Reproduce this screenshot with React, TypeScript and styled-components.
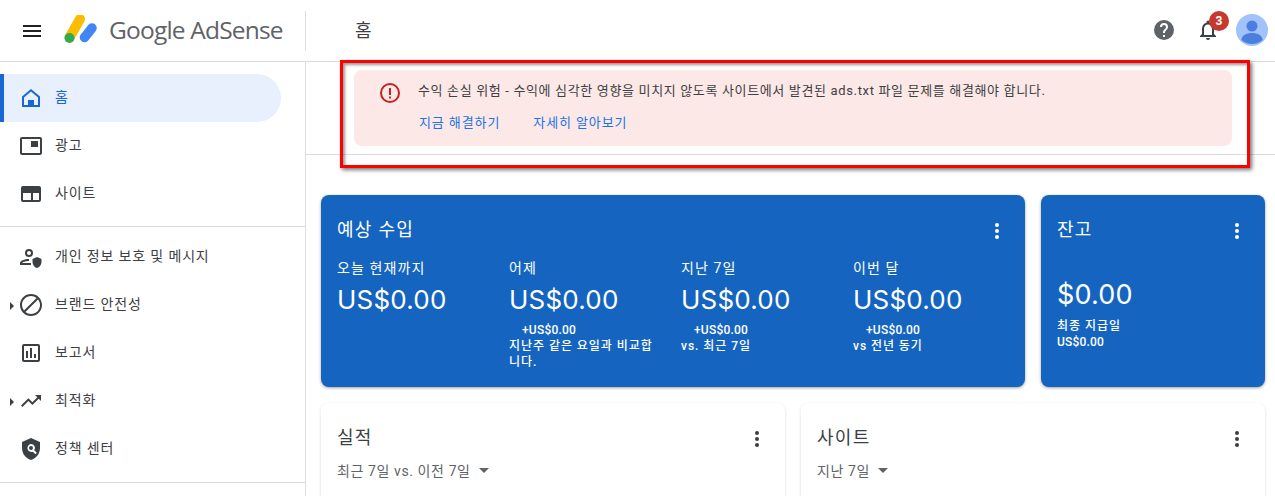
import styled, { createGlobalStyle } from "styled-components";
import type { ReactNode } from "react";

const Global = createGlobalStyle`
  html, body { margin: 0; padding: 0; background: #fff; }
  body { font-family: Roboto, "Noto Sans CJK KR", sans-serif; color: #3c4043; }
  * { box-sizing: border-box; }
`;

const Page = styled.div`
  position: relative;
  width: 1275px;
  height: 496px;
  overflow: hidden;
`;

const Header = styled.header`
  display: flex;
  align-items: center;
  height: 62px;
  border-bottom: 1px solid #dadce0;
`;

const MenuButton = styled.div`
  width: 64px;
  display: flex;
  justify-content: center;
`;

const Logo = styled.div`
  display: flex;
  align-items: center;
  width: 242px;
  gap: 11px;
  height: 40px;
  border-right: 1px solid #dadce0;
`;

const LogoText = styled.span`
  font: 400 24.5px "Open Sans", sans-serif;
  letter-spacing: -0.8px;
  color: #5f6368;
  margin-bottom: 2px;
`;

const PageTitle = styled.div`
  margin: 0 0 4px 49px;
  font-size: 18px;
  color: #3c4043;
`;

const HeaderTools = styled.div`
  margin: 0 7px 1px auto;
  display: flex;
  align-items: center;
  gap: 20px;
`;

const Bell = styled.div`
  position: relative;
  width: 24px;
  height: 24px;
  margin-right: -4px;
`;

const BellBadge = styled.span`
  position: absolute;
  top: -7px;
  left: 13px;
  width: 20px;
  height: 20px;
  border-radius: 50%;
  background: #c5392f;
  color: #fff;
  font-size: 12px;
  font-weight: 700;
  line-height: 20px;
  text-align: center;
`;

const Body = styled.div`
  display: flex;
  height: 434px;
`;

const Sidebar = styled.nav`
  width: 306px;
  flex: none;
  border-right: 1px solid #dadce0;
  padding-top: 12px;
`;

const NavItem = styled.div<{ $active?: boolean }>`
  position: relative;
  display: flex;
  align-items: center;
  height: 48px;
  width: 281px;
  gap: 12px;
  font-size: 14px;
  letter-spacing: 0.85px;
  color: ${(p) => (p.$active ? "#1967d2" : "#3c4043")};
  background: ${(p) => (p.$active ? "#e8f0fe" : "transparent")};
  border-radius: ${(p) => (p.$active ? "0 24px 24px 0" : "0")};
  border-left: ${(p) => (p.$active ? "4px solid #1967d2" : "none")};
  padding-left: ${(p) => (p.$active ? "15px" : "19px")};
`;

const NavLabel = styled.span`
  margin-bottom: 5px;
`;

const Caret = styled.span`
  position: absolute;
  left: 10px;
  top: 21px;
  border-left: 4px solid #3c4043;
  border-top: 4px solid transparent;
  border-bottom: 4px solid transparent;
`;

const NavDivider = styled.hr<{ $last?: boolean }>`
  margin: ${(p) => (p.$last ? "9px 0" : "8px 0 6px")};
  border: 0;
  border-top: 1px solid #dadce0;
`;

const Main = styled.main`
  flex: 1;
  min-width: 0;
`;

const BannerArea = styled.div`
  height: 93px;
  padding: 8px 43px 0 48px;
  border-bottom: 1px solid #dadce0;
`;

const Banner = styled.div`
  height: 76px;
  border-radius: 8px;
  background: #fce8e6;
  padding: 11px 0 0 24px;
  display: flex;
  gap: 16px;
`;

const BannerText = styled.div`
  font-size: 13px;
  letter-spacing: 0.65px;
  padding-top: 0;
  line-height: 19px;
  color: #3c4043;
`;

const BannerLinks = styled.div`
  display: flex;
  gap: 33px;
  margin: 13px 0 0 1px;
  letter-spacing: 0.9px;
  color: #1a73e8;
`;

const Annotation = styled.div`
  position: absolute;
  left: 340px;
  top: 60px;
  width: 910px;
  height: 108px;
  border: 3px solid #ff0000;
  box-shadow: 2px 2px 4px rgba(0, 0, 0, 0.55), inset 2px 2px 3px rgba(0, 0, 0, 0.4);
`;

const Cards = styled.div`
  display: grid;
  grid-template-columns: 704px 224px;
  gap: 16px;
  padding: 40px 0 0 15px;
`;

const Card = styled.section<{ $blue?: boolean }>`
  position: relative;
  border-radius: 8px;
  background: ${(p) => (p.$blue ? "#1565c0" : "#fff")};
  color: ${(p) => (p.$blue ? "#fff" : "#3c4043")};
  padding: 21px 16px;
  box-shadow: 0 1px 2px rgba(60, 64, 67, 0.3), 0 1px 3px 1px rgba(60, 64, 67, 0.15);
`;

const BlueCard = styled(Card)`
  height: 192px;
`;

const BottomCards = styled.div`
  display: grid;
  grid-template-columns: 464px 464px;
  gap: 16px;
  padding: 16px 0 0 15px;
`;

const WhiteCard = styled(Card)`
  height: 120px;
  box-shadow: 0 1px 3px rgba(60, 64, 67, 0.2);
`;

const CardTitle = styled.h2`
  margin: 0;
  font-size: 18px;
  font-weight: 400;
  letter-spacing: 1.3px;
  line-height: 27px;
`;

const More = styled.span`
  position: absolute;
  right: 16px;
  top: 24px;
  display: flex;
`;

const Metrics = styled.div`
  display: grid;
  grid-template-columns: repeat(4, 172px);
  margin-top: 15px;
`;

const MetricLabel = styled.div`
  font-size: 14px;
  letter-spacing: 1.1px;
  line-height: 20px;
`;

const MetricValue = styled.div`
  font: 400 26px Inter, sans-serif;
  letter-spacing: 0.2px;
  line-height: 38px;
  margin-top: 3px;
`;

const MetricDelta = styled.div`
  font-size: 12px;
  font-weight: 500;
  letter-spacing: 0.2px;
  line-height: 16px;
  margin-top: 3px;
  padding-left: 13px;
`;

const MetricNote = styled.div`
  font-size: 12px;
  font-weight: 500;
  letter-spacing: 0.95px;
  line-height: 16px;
  width: 150px;
`;

const BalanceValue = styled(MetricValue)`
  font-size: 27px;
  margin-top: 33px;
  margin-bottom: 4px;
`;

const BalanceAmount = styled(MetricDelta)`
  margin-top: 0;
  padding-left: 0;
`;

const Range = styled.div`
  display: flex;
  align-items: center;
  gap: 8px;
  margin-top: 9px;
  font-size: 14px;
  letter-spacing: 0.6px;
  color: #5f6368;
`;

const RangeCaret = styled.span`
  border-top: 5px solid #5f6368;
  border-left: 5px solid transparent;
  border-right: 5px solid transparent;
`;

const NavIcon = ({ children }: { children: ReactNode }) => (
  <svg width="24" height="24" viewBox="0 0 24 24" fill="#3c4043" style={{ flex: "none" }}>
    {children}
  </svg>
);

const Dots = ({ color }: { color: string }) => (
  <svg width="24" height="24" viewBox="0 0 24 24" fill={color}>
    <circle cx="12" cy="6" r="2" />
    <circle cx="12" cy="12" r="2" />
    <circle cx="12" cy="18" r="2" />
  </svg>
);

const nav = [
  { label: "광고", icon: <path d="M21 3H3a2 2 0 0 0-2 2v14c0 1.1.9 2 2 2h18a2 2 0 0 0 2-2V5a2 2 0 0 0-2-2zm0 16H3V5h18v14zM19 7h-7v6h7V7z" /> },
  { label: "사이트", icon: <path d="M20 4H4a2 2 0 0 0-2 2v12c0 1.1.9 2 2 2h16a2 2 0 0 0 2-2V6a2 2 0 0 0-2-2zM4 18v-7h8v7H4zm10 0v-7h6v7h-6z" /> },
];

const nav2 = [
  {
    label: "개인 정보 보호 및 메시지",
    icon: <path d="M10 12a4 4 0 1 0 0-8 4 4 0 0 0 0 8zm0-6a2 2 0 1 1 0 4 2 2 0 0 1 0-4zM3 18c.2-.7 3.3-2 7-2v-2c-4.700 0-9 1.800-9 4v2h11v-2H3zm15-6l-4.500 2v3c0 2.800 1.900 5.400 4.500 6 2.600-.6 4.500-3.200 4.500-6v-3L18 12z" />,
  },
  {
    label: "브랜드 안전성",
    caret: true,
    icon: <path d="M12 1C5.900 1 1 5.900 1 12s4.900 11 11 11 11-4.900 11-11S18.100 1 12 1zM3 12c0-5 4-9 9-9 2.100 0 4.100.7 5.600 2L5 17.600A8.900 8.900 0 0 1 3 12zm9 9c-2.100 0-4.100-.7-5.600-2L19 6.400c1.300 1.500 2 3.500 2 5.600 0 5-4 9-9 9z" />,
  },
  {
    label: "보고서",
    icon: <path d="M19 3H5a2 2 0 0 0-2 2v14c0 1.100.9 2 2 2h14a2 2 0 0 0 2-2V5a2 2 0 0 0-2-2zm0 16H5V5h14v14zM7 10h2v7H7v-7zm4-3h2v10h-2V7zm4 6h2v4h-2v-4z" />,
  },
  {
    label: "최적화",
    caret: true,
    icon: <path d="M16 6l2.300 2.300-4.900 4.900-4-4L2 16.600 3.400 18l6-6 4 4 6.300-6.300L22 12V6h-6z" />,
  },
  {
    label: "정책 센터",
    icon: <path fillRule="evenodd" d="M12 1L3 5v6c0 5.600 3.800 10.700 9 12 5.200-1.300 9-6.400 9-12V5l-9-4zm0 6a4 4 0 0 1 3.300 6.300l2.500 2.500-1.400 1.400-2.500-2.500A4 4 0 1 1 12 7zm0 2a2 2 0 1 0 0 4 2 2 0 0 0 0-4z" />,
  },
];

const metrics = [
  { label: "오늘 현재까지" },
  { label: "어제", note: "지난주 같은 요일과 비교합니다." },
  { label: "지난 7일", note: "vs. 최근 7일" },
  { label: "이번 달", note: "vs 전년 동기" },
];

export default function App() {
  return (
    <Page>
      <Global />
      <Header>
        <MenuButton>
          <svg width="24" height="24" viewBox="0 0 24 24" fill="#202124">
            <path d="M3 18h18v-2H3v2zm0-5h18v-2H3v2zm0-7v2h18V6H3z" />
          </svg>
        </MenuButton>
        <Logo>
          <svg width="34" height="32" viewBox="0 0 34 32">
            <path d="M16 4 L5.500 22.500" stroke="#fbbc04" strokeWidth="10" strokeLinecap="round" />
            <path d="M28 13 L20.500 22.500" stroke="#4285f4" strokeWidth="9.500" strokeLinecap="round" />
            <circle cx="5.500" cy="23" r="5" fill="#34a853" />
          </svg>
          <LogoText>Google AdSense</LogoText>
        </Logo>
        <PageTitle>홈</PageTitle>
        <HeaderTools>
          <svg width="24" height="24" viewBox="0 0 24 24" fill="#5f6368">
            <path d="M12 2a10 10 0 1 0 0 20 10 10 0 0 0 0-20zm1 17h-2v-2h2v2zm2.100-7.700-.9.900c-.7.700-1.200 1.300-1.200 2.800h-2v-.5c0-1.100.5-2.100 1.200-2.800l1.200-1.300c.4-.3.600-.8.600-1.400a2 2 0 0 0-4 0H8a4 4 0 0 1 8 0c0 .9-.4 1.700-.9 2.300z" />
          </svg>
          <Bell>
            <svg width="24" height="24" viewBox="0 0 24 24" fill="#3c4043">
              <path d="M12 22a2 2 0 0 0 2-2h-4a2 2 0 0 0 2 2zm6-6v-5c0-3.100-1.600-5.600-4.500-6.300V4a1.500 1.500 0 0 0-3 0v.7C7.600 5.400 6 7.900 6 11v5l-2 2v1h16v-1l-2-2zm-2 1H8v-6c0-2.500 1.500-4.500 4-4.500s4 2 4 4.500v6z" />
            </svg>
            <BellBadge>3</BellBadge>
          </Bell>
          <svg width="32" height="32" viewBox="0 0 32 32">
            <circle cx="16" cy="16" r="16" fill="#a1c2fa" />
            <circle cx="16" cy="12" r="5.500" fill="#4a7fe0" />
            <path d="M5.500 26c0-4.500 5-7 10.500-7s10.500 2.500 10.500 7a16 16 0 0 1-21 0z" fill="#4a7fe0" />
          </svg>
        </HeaderTools>
      </Header>
      <Body>
        <Sidebar>
          <NavItem $active>
            <svg width="24" height="24" viewBox="0 0 24 24" fill="#1967d2" style={{ flex: "none" }}>
              <path d="M12 3 3 10.500V21h18V10.500L12 3zm7 16H5v-7.600l7-5.800 7 5.800V19z" />
              <path d="M9 14h6v6H9z" />
            </svg>
            <NavLabel>홈</NavLabel>
          </NavItem>
          {nav.map((n) => (
            <NavItem key={n.label}>
              <NavIcon>{n.icon}</NavIcon>
              <NavLabel>{n.label}</NavLabel>
            </NavItem>
          ))}
          <NavDivider />
          {nav2.map((n) => (
            <NavItem key={n.label}>
              {n.caret && <Caret />}
              <NavIcon>{n.icon}</NavIcon>
              <NavLabel>{n.label}</NavLabel>
            </NavItem>
          ))}
          <NavDivider $last />
        </Sidebar>
        <Main>
          <BannerArea>
            <Banner>
              <svg width="24" height="24" viewBox="0 0 24 24" fill="#c5221f" style={{ flex: "none" }}>
                <path d="M11 7h2v7h-2V7zm0 8.500h2v2h-2v-2zM12 2a10 10 0 1 0 0 20 10 10 0 0 0 0-20zm0 18a8 8 0 1 1 0-16 8 8 0 0 1 0 16z" />
              </svg>
              <BannerText>
                수익 손실 위험 - 수익에 심각한 영향을 미치지 않도록 사이트에서 발견된 ads.txt 파일 문제를 해결해야 합니다.
                <BannerLinks>
                  <span>지금 해결하기</span>
                  <span>자세히 알아보기</span>
                </BannerLinks>
              </BannerText>
            </Banner>
          </BannerArea>
          <Cards>
            <BlueCard $blue>
              <CardTitle>예상 수입</CardTitle>
              <More><Dots color="#fff" /></More>
              <Metrics>
                {metrics.map((m) => (
                  <div key={m.label}>
                    <MetricLabel>{m.label}</MetricLabel>
                    <MetricValue>US$0.00</MetricValue>
                    {m.note && <MetricDelta>+US$0.00</MetricDelta>}
                    {m.note && <MetricNote>{m.note}</MetricNote>}
                  </div>
                ))}
              </Metrics>
            </BlueCard>
            <BlueCard $blue>
              <CardTitle>잔고</CardTitle>
              <More><Dots color="#fff" /></More>
              <BalanceValue>$0.00</BalanceValue>
              <MetricNote>최종 지급일</MetricNote>
              <BalanceAmount>US$0.00</BalanceAmount>
            </BlueCard>
          </Cards>
          <BottomCards>
            <WhiteCard>
              <CardTitle>실적</CardTitle>
              <More><Dots color="#3c4043" /></More>
              <Range>최근 7일 vs. 이전 7일 <RangeCaret /></Range>
            </WhiteCard>
            <WhiteCard>
              <CardTitle>사이트</CardTitle>
              <More><Dots color="#3c4043" /></More>
              <Range>지난 7일 <RangeCaret /></Range>
            </WhiteCard>
          </BottomCards>
        </Main>
      </Body>
      <Annotation />
    </Page>
  );
}
